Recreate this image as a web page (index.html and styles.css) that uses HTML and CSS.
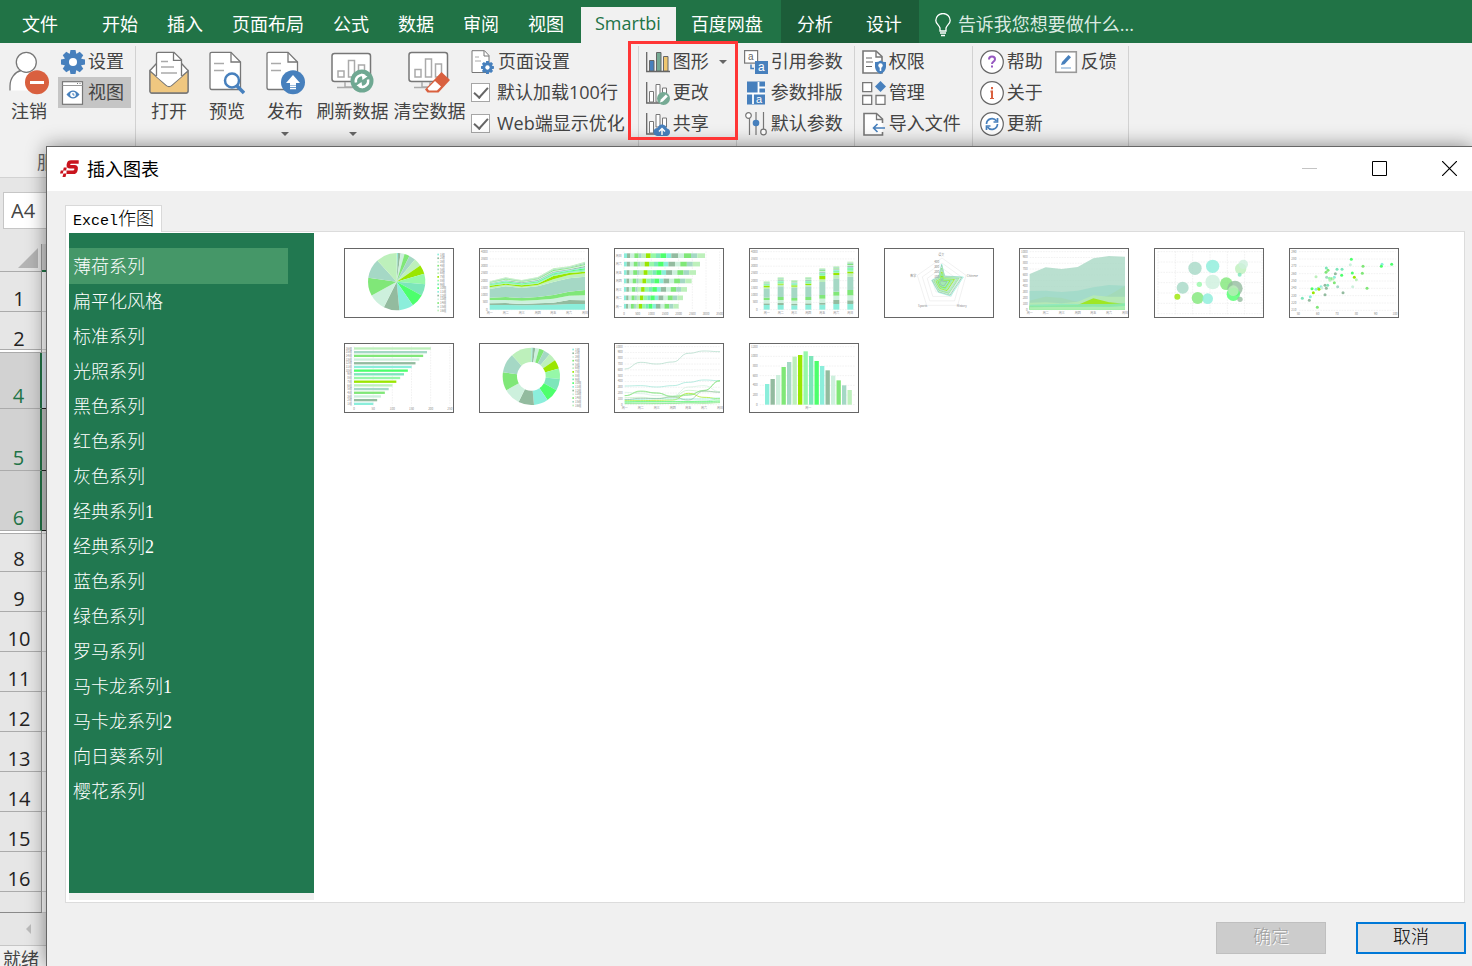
FILE: index.html
```html
<!DOCTYPE html>
<html lang="zh-CN">
<head>
<meta charset="utf-8">
<title>插入图表</title>
<link rel="stylesheet" href="styles.css">
</head>
<body>
<div class="app">
	<nav class="menu">
		<button class="menuFile">文件</button>
		<button>开始</button>
		<button>插入</button>
		<button>页面布局</button>
		<button>公式</button>
		<button>数据</button>
		<button>审阅</button>
		<button>视图</button>
		<button class="menuActive">Smartbi</button>
		<button>百度网盘</button>
		<div class="menuTools">
			<button>分析</button>
			<button>设计</button>
		</div>
		<button class="tellMe">
			<svg width="16" height="24" viewBox="0 0 16 24" fill="none" stroke="#fff" stroke-width="1.3"><path d="M5 18v-3C4 12 .8 10.500.8 7.500a7.200 7 0 0 1 14.400 0C15.200 10.500 12 12 11 15v3z"/><path d="M5 20h6M6 22.500h4"/></svg>
			<span>告诉我您想要做什么...</span>
		</button>
	</nav>

	<div class="ribbon">
		<div class="group groupUser">
			<div class="tools">
				<button class="big">
					<svg width="40" height="44" viewBox="0 0 40 44"><path d="M1 39.500V35C1 27 6 21 13 20l9 0 6 6v13.500z" fill="#fff"/><path d="M1 39.500V35C1 27 6 21 12 19.500" fill="none" stroke="#777" stroke-width="1.300"/><circle cx="17.300" cy="11.300" r="10" fill="#fff" stroke="#777" stroke-width="1.300"/><circle cx="28" cy="31.300" r="12" fill="#d9603f"/><path d="M21 31.500h14" stroke="#fff" stroke-width="3"/></svg>
					<span>注销</span>
				</button>
				<div class="col">
					<button class="small">
						<svg width="24" height="24" viewBox="0 0 24 24"><g fill="#4780bd"><circle cx="12" cy="12" r="9"/><path id="tooth" d="M9.500 0h5l1 5h-7zM9.500 24h5l1-5h-7z"/><use href="#tooth" transform="rotate(45 12 12)"/><use href="#tooth" transform="rotate(90 12 12)"/><use href="#tooth" transform="rotate(135 12 12)"/></g><circle cx="12" cy="12" r="4" fill="#fff"/></svg>
						<span>设置</span>
					</button>
					<button class="small on">
						<svg width="24" height="24" viewBox="0 0 24 24"><rect x="1.500" y=".7" width="20" height="22.600" fill="#fff" stroke="#777" stroke-width="1.200"/><path d="M1.500 4.500h20" stroke="#999"/><path d="M16 2.500h1M18.500 2.500h1" stroke="#777"/><path d="M5.500 13.500q6.500-8 13 0q-6.500 8-13 0z" fill="#4780bd"/><circle cx="12" cy="13.500" r="2.800" fill="#fff"/><path d="M12 12v2h1.500" stroke="#4780bd" fill="none"/></svg>
						<span>视图</span>
					</button>
				</div>
			</div>
			<div class="groupName">服务</div>
		</div>

		<div class="group groupFile">
			<div class="tools">
				<button class="big">
					<svg width="40" height="44" viewBox="0 0 40 44" stroke="#777" stroke-width="1.300"><path d="M1 19.500L7 13h26l6 6.500V40q0 2-2 2H3q-2 0-2-2z" fill="#fff"/><path d="M1 20l16.500 14.500q2.500 2 5 0L39 20v20q0 2-2 2H3q-2 0-2-2z" fill="#efc780"/><path d="M7.500 25.500V3q0-1.700 1.700-1.700H25l7.500 7.500v16.700L22.500 34q-2.500 2-5 0z" fill="#fff" stroke="none"/><path d="M7.500 25V3q0-1.700 1.700-1.700H25l7.500 7.500V25M24.500 1.500v7.800h8" fill="none"/><path d="M12 10.500h7M12 16h13M12 22h16" stroke="#aaa"/></svg>
					<span>打开</span>
				</button>
				<button class="big">
					<svg width="36" height="44" viewBox="0 0 36 44" stroke="#777" stroke-width="1.300"><path d="M1 36.500V3q0-1.700 1.700-1.700H22L31.500 11v25.500q0 2-2 2H2.700q-1.700 0-1.700-2z" fill="#fff"/><path d="M22 1.500V11h9.500" fill="none"/><path d="M5 12.500h10M5 19.500h10" stroke="#aaa"/><circle cx="23" cy="29.500" r="7" fill="#fff" stroke="#4780bd" stroke-width="2.500"/><path d="M28 35l7 7" stroke="#4780bd" stroke-width="3.500"/></svg>
					<span>预览</span>
				</button>
				<button class="big">
					<svg width="39" height="44" viewBox="0 0 39 44" stroke="#777" stroke-width="1.300"><path d="M1 36.500V3q0-1.700 1.700-1.700H22L31.500 11v25.500q0 2-2 2H2.700q-1.700 0-1.700-2z" fill="#fff"/><path d="M22 1.500V11h9.500" fill="none"/><path d="M5 12.500h10M5 19.500h10" stroke="#aaa"/><circle cx="27" cy="31.300" r="12" fill="#4780bd" stroke="none"/><path d="M27 24l7 8h-4v2.500h-6V32h-4z" fill="#fff" stroke="none"/><path d="M24 35.700h6M24 37.700h6" stroke="#fff"/></svg>
					<span>发布</span>
					<i class="caret"></i>
				</button>
				<button class="big wide">
					<svg width="43" height="44" viewBox="0 0 43 44" stroke="#aaa" stroke-width="1.500" fill="#fff"><rect x="1" y="2.500" width="38.500" height="28" rx="2.500" stroke="#777"/><path d="M14 31v5h12v-5M6 36.500h26" fill="none"/><path d="M7 20h6v6H7zM17.500 9.500h6V26h-6zM27.500 14h6v12h-6z"/><circle cx="31" cy="30" r="11.500" fill="#6fa892" stroke="none"/><path d="M25 31.500a6 6 0 0 1 9-6.500M37 28.500a6 6 0 0 1-9 6.500" fill="none" stroke="#fff" stroke-width="2.500"/><path d="M30.500 22.500l6 3-5 3.500zM31.500 37.500l-6-3 5-3.500z" stroke="none"/></svg>
					<span>刷新数据</span>
					<i class="caret"></i>
				</button>
				<button class="big wide">
					<svg width="43" height="44" viewBox="0 0 43 44" stroke="#aaa" stroke-width="1.500" fill="#fff"><rect x="1" y="1.500" width="38.500" height="29" rx="2.500" stroke="#777"/><path d="M14 31v5h8v-5M6 36.500h14" fill="none"/><path d="M7 18.500h6V26H7zM17.500 8h6v18h-6zM27.500 13h6v13h-6z"/><path d="M33.500 21l8.500 8-11.500 12.500H19.500l-2.500-3z" fill="#d9603f" stroke="none"/><path d="M27 30l6 5.500-4 4H21l-1.500-2z" stroke="none"/></svg>
					<span>清空数据</span>
				</button>
				<div class="col colSet">
					<button class="small">
						<svg width="24" height="24" viewBox="0 0 24 24"><path d="M1 .7h12.500L18 5.500v17H1z" fill="#fff" stroke="#777"/><path d="M13 1v5h5" fill="none" stroke="#777"/><path d="M4 7h4M4 11h6" stroke="#aaa"/><g transform="translate(10 11) scale(.54)"><circle cx="12" cy="12" r="9" fill="#4780bd"/><g fill="#4780bd"><use href="#tooth"/><use href="#tooth" transform="rotate(45 12 12)"/><use href="#tooth" transform="rotate(90 12 12)"/><use href="#tooth" transform="rotate(135 12 12)"/></g><circle cx="12" cy="12" r="4" fill="#fff"/></g></svg>
						<span>页面设置</span>
					</button>
					<label class="check"><input type="checkbox" checked><span>默认加载100行</span></label>
					<label class="check"><input type="checkbox" checked><span>Web端显示优化</span></label>
				</div>
			</div>
		</div>

		<div class="group groupChart">
			<div class="col">
				<button class="small">
					<svg width="24" height="24" viewBox="0 0 24 24"><path d="M.7 2v19.500H24" fill="none" stroke="#666" stroke-width="1.300"/><path d="M3.500 10.500h4.500v10.500H3.500z" fill="#4780bd" stroke="#666"/><path d="M10.500 2.500h4.500V21h-4.500z" fill="#76aa94" stroke="#666"/><path d="M17.500 6.500H22V21h-4.500z" fill="#efc770" stroke="#666"/></svg>
					<span>图形</span>
					<i class="caret"></i>
				</button>
				<button class="small">
					<svg width="24" height="24" viewBox="0 0 24 24"><path d="M.7 1v21H14" fill="none" stroke="#666" stroke-width="1.300"/><path d="M3.500 10.500h4V21h-4zM10 3.500h4V21h-4zM16.500 7h4v9h-4z" fill="#fff" stroke="#777"/><circle cx="17.500" cy="17.500" r="6.500" fill="#76aa94"/><path d="M14 21.500l.8-3 5-5 2 2-5 5z" fill="#fff"/></svg>
					<span>更改</span>
				</button>
				<button class="small">
					<svg width="24" height="24" viewBox="0 0 24 24"><path d="M.7 1v21H9" fill="none" stroke="#666" stroke-width="1.300"/><path d="M3.500 9.500h4V21h-4zM10 2.500h4V15h-4zM16.500 6h4v9h-4z" fill="#fff" stroke="#777"/><path d="M11 24q-4-1-3.500-4.500T11.500 16q1.500-4 5-3.500T21 16.500q3 .5 3 3.500t-3 4z" fill="#4780bd"/><path d="M16 23v-6M13 19.500l3-3 3 3" fill="none" stroke="#fff" stroke-width="1.500"/></svg>
					<span>共享</span>
				</button>
			</div>
			<div class="redBox"></div>
		</div>

		<div class="group groupParam">
			<div class="col">
				<button class="small">
					<svg width="24" height="24" viewBox="0 0 24 24"><rect x=".6" y=".6" width="13" height="12.500" fill="#fff" stroke="#777" stroke-width="1.200"/><text x="4" y="10" font-size="10" fill="#666">a</text><path d="M7 14.500v4h3" fill="none" stroke="#4780bd" stroke-width="1.500"/><rect x="11" y="11" width="13" height="13" fill="#4780bd"/><text x="14" y="21" font-size="12" fill="#fff">a</text></svg>
					<span>引用参数</span>
				</button>
				<button class="small">
					<svg width="24" height="24" viewBox="0 0 24 24"><rect x="3" y=".5" width="18" height="23" fill="#4780bd"/><path d="M3 12.500h18M14.500 1v11.500M15 6.500h6M9 12.500V23" stroke="#fff" stroke-width="1.800"/><text x="12" y="21.500" font-size="11" fill="#fff">a</text></svg>
					<span>参数排版</span>
				</button>
				<button class="small">
					<svg width="24" height="24" viewBox="0 0 24 24" fill="none" stroke="#777" stroke-width="1.200"><path d="M5.500 5.500V23M12 0v23M19.500 0v17"/><circle cx="4.500" cy="3.500" r="2.800" fill="#fff"/><circle cx="12" cy="11" r="3.300" fill="#4780bd" stroke="none"/><circle cx="19.500" cy="20" r="2.800" fill="#fff"/></svg>
					<span>默认参数</span>
				</button>
			</div>
		</div>

		<div class="group groupManage">
			<div class="col">
				<button class="small">
					<svg width="24" height="24" viewBox="0 0 24 24"><path d="M1 1h13l6 5.500V23H1z" fill="#fff" stroke="#777" stroke-width="1.600"/><path d="M14 1v6h6" fill="none" stroke="#777" stroke-width="1.400"/><path d="M4 8h6M4 12h7M4 16.500h6" stroke="#666" stroke-width="1.200"/><path d="M18.500 10.500q3 2 5.500 1.500v5q-.5 5-5.500 7-5-2-5.500-7v-5q2.500.5 5.500-1.500z" fill="#4780bd"/><circle cx="18.500" cy="15.500" r="2.200" fill="#fff"/><path d="M18.500 16v5" stroke="#fff" stroke-width="1.600"/></svg>
					<span>权限</span>
				</button>
				<button class="small">
					<svg width="24" height="24" viewBox="0 0 24 24"><path d="M.7 1.700h9v9h-9zM.7 14.500h9v9h-9zM14 14.500h9v9h-9z" fill="#fff" stroke="#777" stroke-width="1.300"/><path d="M18.500 0l5.500 5.500-5.500 5.500L13 5.500z" fill="#4780bd"/></svg>
					<span>管理</span>
				</button>
				<button class="small">
					<svg width="24" height="24" viewBox="0 0 24 24" fill="none"><path d="M20.500 11V7l-6-5.500H2V23h18.500v-3" fill="#fff" stroke="#777" stroke-width="1.600"/><path d="M14.500 2v5.500h6" stroke="#777" stroke-width="1.300"/><path d="M23 16H12M15.500 12l-4 4 4 4" stroke="#4780bd" stroke-width="1.600"/></svg>
					<span>导入文件</span>
				</button>
			</div>
		</div>

		<div class="group groupHelp">
			<div class="col">
				<button class="small">
					<svg width="24" height="24" viewBox="0 0 24 24"><circle cx="12" cy="12" r="11.300" fill="#fff" stroke="#666" stroke-width="1.200"/><path d="M9 9.500q0-3 3-3t3 2.700q0 1.500-1.500 2.400T12 14" fill="none" stroke="#9658c0" stroke-width="2"/><path d="M12 15.500v2" stroke="#9658c0" stroke-width="2"/></svg>
					<span>帮助</span>
				</button>
				<button class="small">
					<svg width="24" height="24" viewBox="0 0 24 24"><circle cx="12" cy="12" r="11.300" fill="#fff" stroke="#666" stroke-width="1.200"/><path d="M12 6v2.200M10.500 10.500H12v7" fill="none" stroke="#d9603f" stroke-width="2"/><path d="M10 17.500h4" stroke="#d9603f"/></svg>
					<span>关于</span>
				</button>
				<button class="small">
					<svg width="24" height="24" viewBox="0 0 24 24" fill="none" stroke="#4780bd" stroke-width="1.700"><circle cx="12" cy="12" r="11.300" fill="#fff" stroke="#666" stroke-width="1.200"/><path d="M6.500 12A5.500 5.500 0 0 1 16.500 9M17.500 12a5.500 5.500 0 0 1-10 3"/><path d="M17.500 6v4h-4M6.500 18v-4h4"/></svg>
					<span>更新</span>
				</button>
			</div>
			<div class="col">
				<button class="small">
					<svg width="24" height="24" viewBox="0 0 24 24"><rect x="1.800" y="1.800" width="20.500" height="20.500" fill="#fff" stroke="#999" stroke-width="1.600"/><path d="M7 18h10" stroke="#b7cfe6" stroke-width="2"/><path d="M7 15l1-3 6.500-7 2.500 2.200-6.500 7z" fill="#4780bd"/></svg>
					<span>反馈</span>
				</button>
			</div>
		</div>
	</div>

	<div class="nameRow"><input class="nameBox" type="text" value="A4" aria-label="名称框"></div>

	<table class="sheet">
		<tr class="head"><th><svg width="20" height="20" viewBox="0 0 20 20"><path d="M20 0v20H0z" fill="#b4b4b4"/></svg></th><td></td></tr>
		<tr><th>1</th><td></td></tr>
		<tr class="row2"><th>2</th><td></td></tr>
		<tr class="cut"><th></th><td></td></tr>
		<tr class="sel row4"><th>4</th><td></td></tr>
		<tr class="sel row5"><th>5</th><td></td></tr>
		<tr class="sel row6"><th>6</th><td></td></tr>
		<tr class="cut"><th></th><td></td></tr>
		<tr class="row8"><th>8</th><td></td></tr>
		<tr><th>9</th><td></td></tr>
		<tr><th>10</th><td></td></tr>
		<tr><th>11</th><td></td></tr>
		<tr><th>12</th><td></td></tr>
		<tr><th>13</th><td></td></tr>
		<tr><th>14</th><td></td></tr>
		<tr><th>15</th><td></td></tr>
		<tr><th>16</th><td></td></tr>
		<tr class="last"><th></th><td></td></tr>
	</table>
	<div class="sheetTabs"><i></i></div>
	<div class="status">就绪</div>

	<div class="dialog" role="dialog" aria-labelledby="dlgTitle">
		<div class="title">
			<svg width="20" height="18" viewBox="0 0 20 18"><path d="M18.700 2H11q-2 0-2.300 1.700l-.3 1.200q-.4 1.900 1.600 1.900h4.500q2 0 1.600 2l-.3 1.400q-.5 2-2.500 2H6.500" fill="none" stroke="#c9141e" stroke-width="3.600"/><path d="M3.800 7.500h3l-.7 3h-3zM.8 10.500h2.700l-.7 3H0zM3.400 13.500h3l-.9 3.500h-3z" fill="#c9141e"/></svg>
			<h1 id="dlgTitle">插入图表</h1>
			<div class="winBtns">
				<button aria-label="最小化"><svg width="15" height="15" viewBox="0 0 15 15"><path d="M0 7.500h15" stroke="#c4c4c4"/></svg></button>
				<button aria-label="最大化"><svg width="15" height="15" viewBox="0 0 15 15"><path d="M.5.5h14v14H.5z" fill="none" stroke="#000"/></svg></button>
				<button aria-label="关闭"><svg width="15" height="15" viewBox="0 0 15 15"><path d="M0 0l15 15M15 0L0 15" stroke="#000" stroke-width="1.200"/></svg></button>
			</div>
		</div>
		<div class="tabs"><button class="tab"><span class="mono">Excel</span>作图</button></div>
		<div class="panel">
			<div class="side">
				<ul class="series">
					<li class="active"><a href="#">薄荷系列</a></li>
					<li><a href="#">扁平化风格</a></li>
					<li><a href="#">标准系列</a></li>
					<li><a href="#">光照系列</a></li>
					<li><a href="#">黑色系列</a></li>
					<li><a href="#">红色系列</a></li>
					<li><a href="#">灰色系列</a></li>
					<li><a href="#">经典系列1</a></li>
					<li><a href="#">经典系列2</a></li>
					<li><a href="#">蓝色系列</a></li>
					<li><a href="#">绿色系列</a></li>
					<li><a href="#">罗马系列</a></li>
					<li><a href="#">马卡龙系列1</a></li>
					<li><a href="#">马卡龙系列2</a></li>
					<li><a href="#">向日葵系列</a></li>
					<li><a href="#">樱花系列</a></li>
				</ul>
			</div>
			<div class="thumbs" id="thumbs"></div>
		</div>
		<div class="foot">
			<button class="btn" disabled>确定</button>
			<button class="btn btnFocus">取消</button>
		</div>
	</div>
</div>
<script src="charts.js"></script>
</body>
</html>
```

FILE: styles.css
```css
*{ box-sizing:border-box; margin:0; padding:0;}
body{ font:18px/24px "Open Sans","Noto Sans CJK SC",sans-serif; color:#444; background:#e6e6e6;}
button,input{ font:inherit; color:inherit; background:none; border:0; border-radius:0;}
button{ cursor:pointer; white-space:nowrap;}
svg{ display:block; flex:none;}
ul{ list-style:none;}

.app{ position:relative; height:100vh; overflow:hidden; display:flex; flex-direction:column;}

/* menu */
.menu{ display:flex; flex:none; height:43px; background:#217346; color:#fff;}
.menu button{ padding:4px 14px 0 15px;}
.menu .menuFile{ padding:4px 22px 0; margin-right:7px;}
.menu .menuActive{ margin:7px 0 0 3px; padding:0 15px 4px 14px; background:#f1f1f1; color:#217346;}
.menuTools{ display:flex; margin-left:4px; background:#1c5d39;}
.menu .menuTools button{ padding:4px 17px 0 16px;}
.menu .tellMe{ display:flex; align-items:center; gap:7px; padding:7px 16px 0; color:#dbeae1;}
.menu .tellMe span{ padding-bottom:2px;}

/* ribbon */
.ribbon{ display:flex; flex:none; height:135px; padding-top:3px; background:#f1f1f1; border-bottom:1px solid #d2d2d2;}
.group{ position:relative; display:flex; border-right:1px solid #d2d2d2;}
.groupUser{ flex-direction:column; justify-content:space-between; padding:0 4px 3px 0;}
.groupName{ padding-left:37px; color:#666;}
.groupFile{ padding:0 13px 0 4px;}
.groupChart,.groupParam,.groupManage,.groupHelp{ padding:0 9px 0 7px;}
.groupHelp{ gap:11px;}
.groupParam,.groupManage,.groupHelp{ padding-right:11px;}
.tools{ display:flex;}
.big{ display:flex; flex-direction:column; align-items:center; width:58px; padding-top:5px;}
.big span{ margin-top:4px;}
.big.wide{ width:77px;}
.big .caret{ margin-top:9px;}
.caret{ border:4px solid transparent; border-top-color:#666; border-bottom:0;}
.col{ display:flex; flex-direction:column;}
.colSet{ padding-left:3px;}
.small{ display:flex; align-items:center; gap:3px; height:31px;}
.small span,.check span{ padding-bottom:2px;}
.small .caret{ margin:0 0 0 7px;}
.groupUser .small{ padding:0 7px 0 3px;}
.small.on{ background:#c5c5c5;}
.small text{ font-family:"Liberation Sans",sans-serif;}
.check{ display:flex; align-items:center; gap:7px; height:31px; white-space:nowrap;}
.check input{ appearance:none; display:grid; place-items:center; width:19px; height:19px; background:#fff; border:1px solid #a6a6a6;}
.check input:checked:after{ content:""; width:6px; height:12px; margin-bottom:3px; border:solid #666; border-width:0 2px 2px 0; transform:rotate(42deg);}
.redBox{ position:absolute; left:-11px; right:-2px; top:-5px; height:99px; border:3px solid #ff3636; z-index:2; pointer-events:none;}

/* sheet */
.nameRow{ flex:none; padding:14px 0 15px 3px;}
.nameBox{ display:block; width:110px; height:37px; padding-left:7px; font-size:20px; background:#fff; border:1px solid #c6c6c6;}
.sheet{ flex:none; width:100%; border-spacing:0; table-layout:fixed;}
.sheet th{ width:42px; height:40px; padding:0 3px 0 0; vertical-align:bottom; font-size:20px; font-weight:400; line-height:24px; color:#222; border-right:1px solid #9b9b9b; border-bottom:1px solid #ababab;}
.sheet td{ background:#fff; border-bottom:1px solid #d4d4d4;}
.sheet .head th{ height:28px; padding:0 3px 3px 18px;}
.sheet .head td{ background:#d2d2d2; border-bottom:2px solid #217346;}
.sheet .row2 th{ height:38px; line-height:20px;}
.sheet .cut th{ height:3px; background:#fff; line-height:0;}
.sheet .sel th{ background:#d2d2d2; color:#217346; border-right:2px solid #217346;}
.sheet .sel td{ background:#c3c3c3; border-bottom-color:#222;}
.sheet .row4 td{ background:#dce6f1;}
.sheet .row4 th{ height:56px;}
.sheet .row5 th{ height:62px;}
.sheet .row6 th{ height:60px;}
.sheet .row8 th{ height:38px;}
.sheet .last th{ height:21px; border-bottom-color:#8a8a8a;}
.sheetTabs{ display:flex; flex:none; align-items:center; height:33px; padding-left:26px; border-bottom:1px solid #c6c6c6;}
.sheetTabs i{ border:5px solid transparent; border-right-color:#bbb; border-left:0;}
.status{ flex:none; padding:1px 3px; background:#f1f1f1;}

/* dialog */
.dialog{ position:absolute; left:46px; right:0; top:146px; bottom:0; display:flex; flex-direction:column; background:#f0f0f0; border:solid #666; border-width:1px 0 0 1px; box-shadow:0 0 18px rgba(0,0,0,.45); color:#000;}
.title{ display:flex; align-items:center; gap:7px; height:44px; padding:0 0 1px 13px; background:#fff;}
.title h1{ font-size:18px; font-weight:400;}
.winBtns{ display:flex; gap:25px; margin-left:auto;}
.winBtns button{ display:grid; place-items:center; width:45px; height:43px;}
.tabs{ display:flex; padding:14px 0 0 18px;}
.tab{ z-index:1; height:27px; margin-bottom:-1px; padding:0 7px 4px; background:#fff; border:1px solid #d9d9d9; border-bottom:0; font-weight:300;}
.mono{ font-family:"Liberation Mono",monospace; font-size:15px; font-weight:400;}
.panel{ display:flex; flex:1; margin:0 7px 0 18px; padding:1px 3px 2px; background:#fff; border:1px solid #dcdcdc;}
.side{ display:flex; width:245px; padding-bottom:7px; background:#f0f0f0;}
.series{ flex:1; padding:15px 26px 0 0; background:#217850;}
.series a{ display:block; height:36px; margin-bottom:-1px; padding-left:4px; font-family:"Liberation Serif","Noto Sans CJK SC",serif; font-weight:300; line-height:38px; color:#fff; text-decoration:none;}
.series .active a{ background:#459768;}
.thumbs{ display:grid; flex:1; grid-template-columns:repeat(auto-fill,110px); gap:25px; align-content:start; padding:15px 30px;}
.thumb{ height:70px; background:#fff; border:1px solid #666;}
.thumb svg{ width:100%; height:100%; font:9px "Noto Sans CJK SC",sans-serif; fill:#888;}
.foot{ display:flex; justify-content:flex-end; gap:30px; padding:19px 6px 12px;}
.btn{ width:110px; height:32px; padding-bottom:4px; background:#e1e1e1; border:2px solid #0078d7; color:#000; font-weight:300;}
.btn:disabled{ background:#ccc; border:1px solid #bfbfbf; color:#a0a0a0; text-shadow:1px 1px #fff;}
```

FILE: charts.js
```js
var colors=['#8beedb','#93bb9f','#cdf0dd','#80e778','#a5d8c5','#bdf0bb','#9ae600','#96f8a8','#7de6ba','#4dff6c','#8beedb','#93bb9f','#cdf0dd','#80e778','#a5d8c5','#bdf0bb'];
var days=['周一','周二','周三','周四','周五','周六','周日'];
var xs=[32,80,128,176,223,270,318];

function line(x1,y1,x2,y2)
{
	return '<path d="M'+x1+' '+y1+'L'+x2+' '+y2+'" stroke="#e4e4e4" stroke-width="1.500" stroke-dasharray="5 3"/>';
}
function text(x,y,s,anchor)
{
	return '<text x="'+x+'" y="'+y+'" text-anchor="'+(anchor||'middle')+'">'+s+'</text>';
}
function rect(x,y,w,h,c)
{
	return '<rect x="'+x+'" y="'+y+'" width="'+w+'" height="'+h+'" fill="'+c+'"/>';
}
function dot(x,y,r,c,o)
{
	return '<circle cx="'+x+'" cy="'+y+'" r="'+r+'" fill="'+c+'" opacity="'+(o||1)+'"/>';
}
function yAxis(max,step,x)
{
	var s='',n=max/step;
	for(var i=0;i<=n;i++)
	{
		var y=11+174*i/n;
		s+=line(x,y,318,y)+text(x-6,y+3,max-i*step,'end');
	}
	return s;
}
function dayAxis(pos)
{
	return pos.map(function(x,i){ return text(x,199,days[i]); }).join('');
}

//pie and ring
function pie(cx,cy,r,hole)
{
	var s='',a=-Math.PI/2;
	for(var i=0;i<16;i++)
	{
		var b=a+(i+1)/136*Math.PI*2;
		s+='<path fill="'+colors[i]+'" d="M'+cx+' '+cy+'L'+(cx+r*Math.cos(a))+' '+(cy+r*Math.sin(a))+'A'+r+' '+r+' 0 0 1 '+(cx+r*Math.cos(b))+' '+(cy+r*Math.sin(b))+'z"/>';
		s+=rect(280,17+i*11.2,5,5,colors[i])+text(288,23+i*11.2,(i+1)+'组','start');
		a=b;
	}
	if(hole) s+=dot(cx,cy,hole,'#fff');
	return s;
}

//cumulative tops of the stacked series
var stack=[
	[185,185,185,185,185,185,185],
	[171,171,172,171,170,168,168],
	[166,165,168,166,164,156,157],
	[156,156,158,156,152,143,142],
	[149,147,150,147,141,131,126],
	[123,115,120,115,102,91,86],
	[118,110,116,111,94,81,76],
	[113,107,112,107,84,75,71]
];
var top7=stack[7],peak=[100,88,96,87,61,55,41];
for(var k=1;k<=9;k++)
{
	stack.push(top7.map(function(y,i){ return y+(peak[i]-y)*k/9; }));
}
function stackArea()
{
	var s=yAxis(4000,500,32)+dayAxis(xs);
	for(var i=1;i<stack.length;i++)
	{
		var p=xs.map(function(x,j){ return x+','+stack[i][j]; });
		var q=xs.map(function(x,j){ return x+','+stack[i-1][j]; }).reverse();
		s+='<polygon fill="'+colors[i-1]+'" points="'+p.concat(q).join(' ')+'"/>';
	}
	return s;
}
function stackColumn()
{
	var pos=[53,95,136,178,220,262,304];
	var s=yAxis(4000,500,32)+dayAxis(pos);
	pos.forEach(function(x,j)
	{
		for(var i=1;i<stack.length;i++)
		{
			s+=rect(x-9,stack[i][j],18,stack[i-1][j]-stack[i][j],colors[i-1]);
		}
	});
	return s;
}
function stackBar()
{
	var w=[9,10,12,13,9,13,14,16,13,18,15,21,17,21,19,23];
	var len=[243,228,216,203,189,177,164];
	var s='';
	for(var i=0;i<8;i++)
	{
		s+=line(30+i*41,10,30+i*41,188)+text(30+i*41,201,i*500);
	}
	len.forEach(function(l,j)
	{
		var x=30;
		s+=text(23,27+j*25.3,days[6-j],'end');
		w.forEach(function(v,i)
		{
			s+=rect(x,16+j*25.3,v*l/243,14,colors[i]);
			x+=v*l/243;
		});
	});
	return s;
}

function radar()
{
	var s='';
	function pts(list,k){ return list.map(function(p){ return (174+(p[0]-174)*k)+','+(105+(p[1]-105)*k); }).join(' '); }
	var ring=[[174,30],[246,82],[221,172],[128,172],[100,82]];
	var shape=[[173,48],[182,84],[238,87],[200,144],[163,133],[143,97],[164,86]];
	for(var i=1;i<=5;i++)
	{
		s+='<polygon points="'+pts(ring,i/5)+'" fill="none" stroke="#e2e2e2" stroke-width="1.500"/>';
	}
	for(var j=0;j<12;j++)
	{
		s+='<polygon points="'+pts(shape,1-j*.07)+'" fill="'+colors[j]+'" fill-opacity=".12" stroke="'+colors[j==9?6:j]+'" stroke-width="2"/>';
	}
	for(var n=1;n<5;n++) s+=text(158,105-n*15,n*100);
	return s+text(172,25,'语文')+text(265,86,'Chinese')+text(88,86,'数学')+text(116,177,'Sports')+text(233,177,'History');
}

var trend=[
	['#a9d8c4',[78,58,63,57,31,24,26]],
	['#93e3d2',[129,128,132,128,118,111,113]],
	['#92dc94',[158,146,150,162,157,142,114]],
	['#bdeebb',[164,163,166,161,142,146,146]],
	['#9ae600',[173,173,172,171,151,163,167]],
	['#8beedb',[170,169,167,168,168,168,165]],
	['#8ae8b0',[176,175,176,175,175,174,168]],
	['#bdf0bb',[178,177,177,177,176,177,174]]
];
//softer fills for the areas that lie one over the other
var fills=['#a9d8c4','#9fdac8','#a3d9b4','#b8ebb4','#9ae600','#8be8c0','#8ae8b0','#b5f0b0'];
function trendArea()
{
	var s=yAxis(1000,100,32)+dayAxis(xs);
	trend.forEach(function(t,k)
	{
		var p=xs.map(function(x,i){ return x+','+t[1][i]; });
		s+='<polygon fill="'+fills[k]+'" opacity=".8" points="32,185 '+p.join(' ')+' 318,185"/>';
	});
	return s;
}
function trendLine()
{
	var s=yAxis(1000,100,32)+dayAxis(xs);
	var more=[
		['#cdf0dd',[148,152,158,159,132,128,146]],
		['#80e778',[158,144,150,160,155,143,113]],
		['#93bb9f',[170,166,167,162,171,144,148]],
		['#96e0b0',[181,180,181,181,179,179,177]],
		['#80e778',[182,182,182,181,180,181,179]],
		['#4dff6c',[177,176,176,176,176,176,174]]
	];
	trend.concat(more).forEach(function(t)
	{
		var d='M32 '+t[1][0];
		for(var i=1;i<7;i++)
		{
			var m=(xs[i-1]+xs[i])/2;
			d+='C'+m+' '+t[1][i-1]+' '+m+' '+t[1][i]+' '+xs[i]+' '+t[1][i];
		}
		s+='<path d="'+d+'" fill="none" stroke="'+t[0]+'" stroke-width="2"/>';
	});
	return s;
}

function bubble()
{
	var s='';
	for(var i=0;i<7;i++)
	{
		s+=line(12+i*52,10,12+i*52,200)+line(12,11+i*31,324,11+i*31);
	}
	[[123,61,20,4],[176,55,20,0],[86,119,18,4],[176,102,22,2],[136,109,8,7],[70,146,9,6],[131,150,18,3],[161,152,16,0],[217,107,19,3],[243,121,23,1],[238,139,20,9],[238,128,16,5],[258,154,8,1],[260,62,17,5],[268,49,14,2],[257,80,6,8]].forEach(function(p)
	{
		s+=dot(p[0],p[1],p[2],colors[p[3]],.8);
	});
	return s;
}
function scatter()
{
	var s='';
	for(var i=0;i<9;i++)
	{
		s+=line(30,11+i*22,320,11+i*22)+text(22,14+i*22,290-i*10,'end');
	}
	for(var j=0;j<6;j++) s+=text(28+j*58,201,50+j*10);
	[[187,34,9],[184,50,2],[222,55,3],[279,49,0],[277,55,9],[308,49,9],[112,60,8],[117,67,3],[111,73,3],[144,64,8],[159,64,8],[139,77,1],[158,82,9],[190,75,9],[220,76,3],[196,88,6],[202,95,5],[81,86,5],[113,88,4],[136,88,0],[127,92,3],[123,97,5],[136,104,3],[108,112,1],[116,112,8],[146,116,4],[191,116,2],[234,121,3],[69,122,9],[81,124,0],[88,121,7],[90,124,6],[96,116,0],[98,120,2],[112,121,1],[73,134,6],[108,140,1],[162,134,1],[64,146,0],[40,151,8],[61,157,1],[85,178,3],[121,91,7],[132,93,5]].forEach(function(p)
	{
		s+=dot(p[0],p[1],4.5,colors[p[2]]);
	});
	return s;
}
function bars()
{
	var s='';
	for(var j=0;j<6;j++) s+=line(30+j*57.5,10,30+j*57.5,188)+text(30+j*57.5,201,j*50);
	for(var i=0;i<16;i++)
	{
		s+=rect(30,179-i*11.07,58+i*11.5,7,colors[i])+text(24,186-i*11.07,(i+1)+'组','end');
	}
	return s;
}
function columns()
{
	var s=yAxis(1200,200,32)+text(178,199,'周一');
	[123,108,96,72,57,41,36,25,39,54,69,82,98,112,127,141].forEach(function(y,i)
	{
		s+=rect(48+i*16.5,y,13,185-y,colors[i]);
	});
	return s;
}

var list=[
	['饼图',pie(158,101,86)],['堆积面积图',stackArea()],['堆积条形图',stackBar()],['堆积柱图',stackColumn()],
	['雷达图',radar()],['面积图',trendArea()],['气泡图',bubble()],['散点图',scatter()],
	['条形图',bars()],['环形图',pie(157,100,86,43)],['曲线图',trendLine()],['柱图',columns()]
];
document.getElementById('thumbs').innerHTML=list.map(function(t)
{
	return '<button class="thumb" aria-label="'+t[0]+'"><svg viewBox="3 3 324 204">'+t[1]+'</svg></button>';
}).join('');
```
